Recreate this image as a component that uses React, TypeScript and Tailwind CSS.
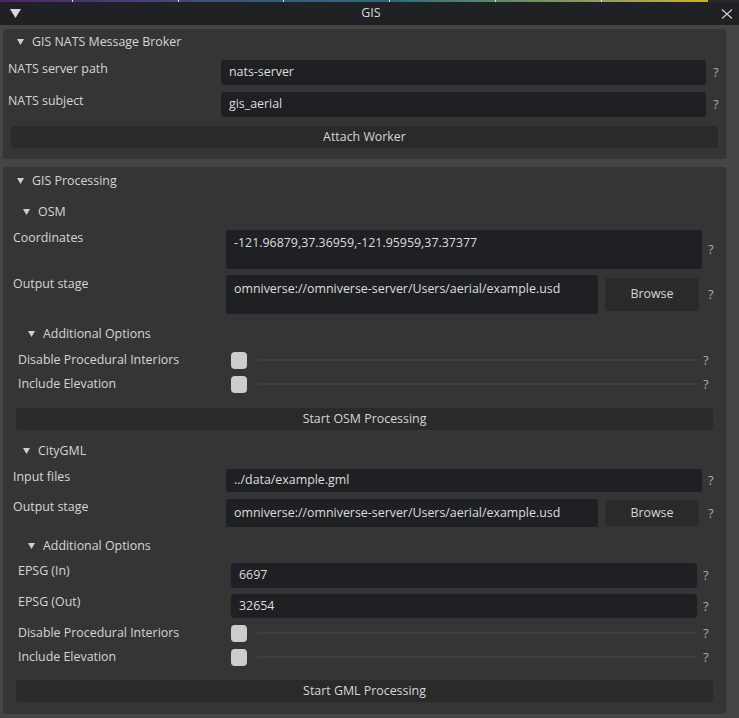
import React from 'react';

const Caret: React.FC<{ size?: 'sm' | 'lg' }> = ({ size = 'sm' }) =>
  size === 'lg' ? (
    <svg width="11" height="9" viewBox="0 0 11 9" className="shrink-0">
      <polygon points="0,0 11,0 5.5,9" fill="#d8d8d8" />
    </svg>
  ) : (
    <svg width="7" height="6" viewBox="0 0 7 6" className="shrink-0">
      <polygon points="0,0 7,0 3.5,6" fill="#cfcfcf" />
    </svg>
  );

const Help: React.FC<{ gap?: string }> = ({ gap = 'ml-[6px]' }) => (
  <span className={`${gap} self-center text-[#ababab] text-[13px] leading-none`}>?</span>
);

const Section: React.FC<{ title: string; indent: string; h: string }> = ({ title, indent, h }) => (
  <div className={`flex items-center gap-[8px] ${indent} ${h}`}>
    <Caret />
    <span>{title}</span>
  </div>
);

const TextRow: React.FC<{
  label: string;
  value: string;
  inputW: string;
  inputH: string;
  labelPt?: string;
  helpGap?: string;
  multiline?: boolean;
}> = ({ label, value, inputW, inputH, labelPt = 'pt-[1px]', helpGap, multiline }) => (
  <div className="flex items-start">
    <div className={`w-[213px] ${labelPt} shrink-0 leading-[16px]`}>{label}</div>
    <div
      className={`${inputW} ${inputH} shrink-0 rounded-[3px] bg-[#1f2023] px-[8px] flex ${
        multiline ? 'items-start pt-[4px]' : 'items-center'
      } text-[#dedede]`}
    >
      {value}
    </div>
    <Help gap={helpGap} />
  </div>
);

const StageRow: React.FC<{ inputH: string; btnH: string; labelPt?: string; multiline?: boolean }> = ({
  inputH,
  btnH,
  labelPt = 'pt-[1px]',
  multiline,
}) => (
  <div className="flex items-start">
    <div className={`w-[213px] ${labelPt} shrink-0 leading-[16px]`}>Output stage</div>
    <div
      className={`w-[372px] ${inputH} shrink-0 rounded-[3px] bg-[#1f2023] px-[8px] flex ${
        multiline ? 'items-start pt-[5px]' : 'items-center'
      } text-[#dedede]`}
    >
      omniverse://omniverse-server/Users/aerial/example.usd
    </div>
    <div className={`ml-[7px] w-[94px] ${btnH} shrink-0 self-center rounded-[3px] bg-[#2a2a2a] flex items-center justify-center`}>
      Browse
    </div>
    <Help gap="ml-[9px]" />
  </div>
);

const CheckRow: React.FC<{ label: string }> = ({ label }) => (
  <div className="flex items-center h-[24px]">
    <div className="w-[213px] shrink-0 leading-[16px]">{label}</div>
    <div className="w-[16px] h-[17px] rounded-[4px] bg-[#cdcdcd] shrink-0" />
    <div className="ml-[10px] w-[440px] h-[2px] bg-[#3e3e3e] shrink-0" />
    <Help />
  </div>
);

const ActionButton: React.FC<{ label: string }> = ({ label }) => (
  <div className="mx-[13px] h-[22px] rounded-[3px] bg-[#2a2a2a] flex items-center justify-center">{label}</div>
);

export default function App() {
  return (
    <div
      className="w-[739px] h-[718px] bg-[#454545] overflow-hidden text-[12.4px] text-[#d6d6d6]"
      style={{ fontFamily: '"Open Sans", "DejaVu Sans", sans-serif' }}
    >
      {/* color strip */}
      <div className="flex h-[2px] bg-[#26282c]">
        <div className="flex w-[708px] h-[2px] bg-linear-to-r from-[#4b2470] via-[#1f6f7a] via-55% to-[#c8b516]">
          <div className="w-[72px]" />
          <div className="w-[106px] border-l border-white/80" />
          <div className="w-[105px] border-l border-white/80" />
          <div className="w-[106px] border-l border-white/80" />
          <div className="w-[106px] border-l border-white/80" />
          <div className="w-[106px] border-l border-white/80" />
          <div className="flex-1 border-l border-white/80" />
        </div>
      </div>

      {/* title bar */}
      <div className="h-[23px] bg-[#1f2125] flex items-center px-[10px]">
        <Caret size="lg" />
        <div className="flex-1 text-center text-[#d8d8d8] leading-none">GIS</div>
        <svg width="12" height="10" viewBox="0 0 12 10" className="mr-[-4px]">
          <path d="M1 0.5 L11 9.5 M11 0.5 L1 9.5" stroke="#d0d0d0" strokeWidth="1.1" />
        </svg>
      </div>

      <div className="pl-[3px] pr-[13px] pt-[4px] flex flex-col gap-[8px]">
        {/* NATS broker */}
        <div className="h-[130px] rounded-[3px] bg-[#353535] flex flex-col">
          <div className="flex items-center gap-[8px] pl-[14px] h-[26px]">
            <Caret />
            <span>GIS NATS Message Broker</span>
          </div>
          <div className="pl-[5px] mt-[5px] flex flex-col gap-[7px]">
            <TextRow label="NATS server path" value="nats-server" inputW="w-[485px]" inputH="h-[25px]" helpGap="ml-[7px]" />
            <TextRow label="NATS subject" value="gis_aerial" inputW="w-[485px]" inputH="h-[25px]" helpGap="ml-[7px]" />
          </div>
          <div className="mx-[8px] mt-[9px] h-[22px] rounded-[3px] bg-[#2a2a2a] flex items-center justify-center">
            Attach Worker
          </div>
        </div>

        {/* processing */}
        <div className="h-[547px] rounded-[3px] bg-[#353535] flex flex-col">
          <div className="flex items-center gap-[8px] pl-[14px] h-[28px]">
            <Caret />
            <span>GIS Processing</span>
          </div>
          <Section title="OSM" indent="pl-[20px] mt-[5px]" h="h-[24px]" />
          <div className="pl-[10px] mt-[6px] flex flex-col gap-[6px]">
            <TextRow
              label="Coordinates"
              value="-121.96879,37.36959,-121.95959,37.37377"
              inputW="w-[476px]"
              inputH="h-[39px]"
              labelPt="pt-0"
              multiline
            />
            <StageRow inputH="h-[39px]" btnH="h-[33px]" multiline />
          </div>
          <Section title="Additional Options" indent="pl-[25px] mt-[8px]" h="h-[24px]" />
          <div className="pl-[15px] mt-[2px] flex flex-col">
            <CheckRow label="Disable Procedural Interiors" />
            <CheckRow label="Include Elevation" />
          </div>
          <div className="mt-[12px]">
            <ActionButton label="Start OSM Processing" />
          </div>

          <Section title="CityGML" indent="pl-[20px] mt-[9px]" h="h-[24px]" />
          <div className="pl-[10px] mt-[6px] flex flex-col gap-[7px]">
            <TextRow label="Input files" value="../data/example.gml" inputW="w-[476px]" inputH="h-[23px]" labelPt="pt-0" />
            <StageRow inputH="h-[28px]" btnH="h-[26px]" labelPt="pt-0" />
          </div>
          <Section title="Additional Options" indent="pl-[25px] mt-[7px]" h="h-[24px]" />
          <div className="pl-[15px] mt-[5px] flex flex-col gap-[6px]">
            <TextRow label="EPSG (In)" value="6697" inputW="w-[466px]" inputH="h-[25px]" labelPt="pt-0" />
            <TextRow label="EPSG (Out)" value="32654" inputW="w-[466px]" inputH="h-[24px]" labelPt="pt-0" />
          </div>
          <div className="pl-[15px] mt-[3px] flex flex-col">
            <CheckRow label="Disable Procedural Interiors" />
            <CheckRow label="Include Elevation" />
          </div>
          <div className="mt-[11px]">
            <ActionButton label="Start GML Processing" />
          </div>
        </div>
      </div>
    </div>
  );
}
